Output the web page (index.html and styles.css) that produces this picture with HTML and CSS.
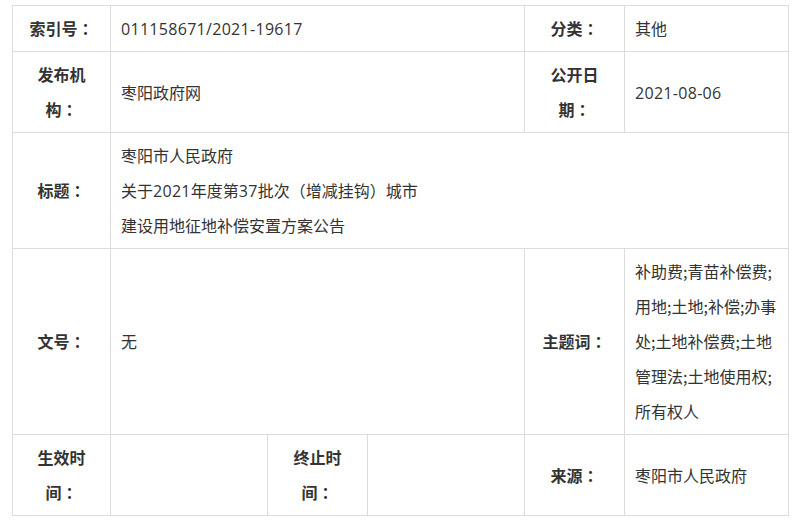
FILE: index.html
```html
<!DOCTYPE html>
<html lang="zh-CN">
<head>
<meta charset="utf-8">
<title>信息公开</title>
<link rel="stylesheet" href="styles.css">
</head>
<body>
<div class="info-grid">
  <div class="cell label"><div class="txt">索引<span class="nb">号<span class="colon">：</span></span></div></div>
  <div class="cell value span3"><div class="txt"><span class="num">011158671/2021-19617</span></div></div>
  <div class="cell label"><div class="txt">分<span class="nb">类<span class="colon">：</span></span></div></div>
  <div class="cell value"><div class="txt">其他</div></div>

  <div class="cell label"><div class="txt">发布机<span class="nb">构<span class="colon">：</span></span></div></div>
  <div class="cell value span3"><div class="txt">枣阳政府网</div></div>
  <div class="cell label"><div class="txt">公开日<span class="nb">期<span class="colon">：</span></span></div></div>
  <div class="cell value"><div class="txt"><span class="num">2021-08-06</span></div></div>

  <div class="cell label"><div class="txt">标<span class="nb">题<span class="colon">：</span></span></div></div>
  <div class="cell value span5"><div class="txt">枣阳市人民政府<br>关于<span class="num">2021</span>年度第<span class="num">37</span>批次（增减挂钩）城市<br>建设用地征地补偿安置方案公告</div></div>

  <div class="cell label"><div class="txt">文<span class="nb">号<span class="colon">：</span></span></div></div>
  <div class="cell value span3"><div class="txt">无</div></div>
  <div class="cell label"><div class="txt">主题<span class="nb">词<span class="colon">：</span></span></div></div>
  <div class="cell value"><div class="txt">补助费;青苗补偿费;<br>用地;土地;补偿;办事<br>处;土地补偿费;土地<br>管理法;土地使用权;<br>所有权人</div></div>

  <div class="cell label"><div class="txt">生效时<span class="nb">间<span class="colon">：</span></span></div></div>
  <div class="cell value"></div>
  <div class="cell label"><div class="txt">终止时<span class="nb">间<span class="colon">：</span></span></div></div>
  <div class="cell value"></div>
  <div class="cell label"><div class="txt">来<span class="nb">源<span class="colon">：</span></span></div></div>
  <div class="cell value"><div class="txt">枣阳市人民政府</div></div>
</div>
</body>
</html>
```

FILE: styles.css
```css
html, body {
  margin: 0;
  padding: 0;
  background: #fff;
}
body {
  padding: 5px 0 0 12px;
  font-family: "Noto Sans CJK SC", sans-serif;
  font-size: 16px;
  color: #333;
}
.info-grid {
  display: grid;
  grid-template-columns: 97px 156px 99px 156px 99px 163px;
  gap: 1px;
  padding: 1px;
  background: #dcdcdc;
  width: max-content;
}
.cell {
  background: #fff;
  line-height: 35px;
  padding: 5px 10px;
  display: flex;
  align-items: center;
  min-width: 0;
}
.txt {
  min-width: 0;
}
.label {
  justify-content: center;
  text-align: center;
  font-weight: bold;
  padding: 5px 12px;
}
.nb {
  white-space: nowrap;
}
.colon {
  display: inline-block;
  width: 1em;
  text-align: center;
  font-family: "Noto Sans CJK TC", "Noto Sans CJK SC", sans-serif;
  line-height: 1;
}
.value {
  padding-left: 10px;
}
.num {
  font-family: "Open Sans", "Noto Sans CJK SC", sans-serif;
  letter-spacing: 0.3px;
  line-height: 1;
}
.span3 { grid-column: span 3; }
.span5 { grid-column: span 5; }
```
